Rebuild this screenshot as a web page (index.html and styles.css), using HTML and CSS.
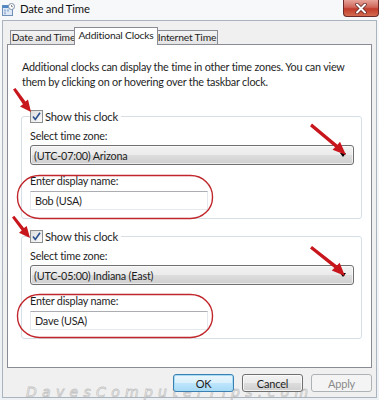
FILE: index.html
```html
<!DOCTYPE html>
<html>
<head>
<meta charset="utf-8">
<link rel="stylesheet" href="styles.css">
</head>
<body>
<div class="window">
  <div class="titlebar">
    <svg class="app-icon" width="13" height="13" viewBox="0 0 13 13">
      <rect x="0.5" y="2.5" width="10" height="10" fill="#dfe9f5" stroke="#6d8fb8"/>
      <rect x="0.5" y="2.5" width="10" height="2.5" fill="#4f86c6"/>
      <rect x="2" y="6.5" width="2" height="2" fill="#9bb6d8"/>
      <rect x="5" y="6.5" width="2" height="2" fill="#9bb6d8"/>
      <rect x="2" y="9.3" width="2" height="2" fill="#9bb6d8"/>
      <circle cx="9.5" cy="3.5" r="3" fill="#fff" stroke="#7a8ea6"/>
      <path d="M9.5 2v1.6h1.3" fill="none" stroke="#555" stroke-width="0.7"/>
    </svg>
    <span class="title">Date and Time</span>
    <div class="close">
      <svg width="14" height="11" viewBox="0 0 14 11">
        <path d="M3 1.5l8 8M11 1.5l-8 8" stroke="#5a2020" stroke-width="3.4" stroke-linecap="round"/>
        <path d="M3 1.5l8 8M11 1.5l-8 8" stroke="#fff" stroke-width="2" stroke-linecap="round"/>
      </svg>
    </div>
  </div>
  <div class="client">
    <div class="tabs">
      <div class="tab t1">Date and Time</div>
      <div class="tab t2 active">Additional Clocks</div>
      <div class="tab t3">Internet Time</div>
    </div>
    <div class="panel">
      <p class="intro">Additional clocks can display the time in other time zones. You can view them by clicking on or hovering over the taskbar clock.</p>
      <fieldset class="group">
        <legend class="legend"><span class="check"><svg width="9" height="9" viewBox="0 0 9 9"><path d="M1 4.5l2.3 3L8 0.8" fill="none" stroke="#2a4f8f" stroke-width="1.6"/></svg></span>Show this clock</legend>
        <div class="label">Select time zone:</div>
        <div class="combo"><span>(UTC-07:00) Arizona</span><span class="caret"></span></div>
        <div class="label second">Enter display name:</div>
        <div class="input">Bob (USA)</div>
      </fieldset>
      <fieldset class="group group2">
        <legend class="legend"><span class="check"><svg width="9" height="9" viewBox="0 0 9 9"><path d="M1 4.5l2.3 3L8 0.8" fill="none" stroke="#2a4f8f" stroke-width="1.6"/></svg></span>Show this clock</legend>
        <div class="label">Select time zone:</div>
        <div class="combo"><span>(UTC-05:00) Indiana (East)</span><span class="caret"></span></div>
        <div class="label second">Enter display name:</div>
        <div class="input">Dave (USA)</div>
      </fieldset>
    </div>
    <div class="buttons">
      <div class="btn default">OK</div>
      <div class="btn">Cancel</div>
      <div class="btn disabled">Apply</div>
    </div>
  </div>
  <div class="watermark">DavesComputerTips.com</div>
  <svg class="annot" width="379" height="400" viewBox="0 0 379 400">
    <g fill="#c8161d">
      <path d="M13 89.5L15.5 88L25.5 101.5L28 99.5L31 112L20 106.5L23 104.3z"/>
      <path d="M310 126.2L312 123.6L337.5 144.7L340 141.8L346 155L332.5 149.8L335.1 147.2z"/>
      <path d="M12 217.5L14.3 215.7L24 228L26.7 226L30 238L19 232.8L21.7 230.5z"/>
      <path d="M310 248.6L312 246L337 265.6L339.6 262.8L345 276L331.8 270.5L334.4 268z"/>
    </g>
    <g stroke="#c0262b" stroke-width="1.4" fill="none">
      <rect x="17.5" y="175.5" width="195" height="43" rx="22" ry="21"/>
      <rect x="17.5" y="294.5" width="195" height="43" rx="22" ry="21"/>
    </g>
  </svg>
</div>
</body>
</html>
```

FILE: styles.css
```css
* { box-sizing: border-box; }
html, body { margin: 0; padding: 0; }
body {
  width: 379px;
  height: 400px;
  overflow: hidden;
  font-family: Lato, "Open Sans", sans-serif;
  font-size: 10.8px;
  letter-spacing: -0.2px;
  color: #1e1e1e;
  background: #f4f6f8;
}
.window {
  position: relative;
  width: 379px;
  height: 400px;
  display: flex;
  flex-direction: column;
  background: linear-gradient(#f7f8f9, #eef1f4);
}
.titlebar {
  height: 20px;
  display: flex;
  align-items: flex-start;
  padding-left: 2px;
}
.app-icon { margin-top: 3px; }
.title {
  margin-left: 5px;
  margin-top: 2px;
  font-size: 11.3px;
  color: #111;
}
.close {
  margin-left: auto;
  width: 36px;
  height: 17px;
  border: 1px solid #6b2b2b;
  border-top: none;
  border-radius: 0 0 4px 4px;
  background: linear-gradient(#e7a49a, #d0675b 45%, #c13b2b 55%, #d46a50);
  display: flex;
  align-items: center;
  justify-content: center;
}
.client {
  flex: 1;
  margin: 0 2px 2px 2px;
  border: 1px solid #aab4bf;
  background: #f0f0f0;
  padding: 6px 4px 0 4px;
  display: flex;
  flex-direction: column;
}
.tabs {
  display: flex;
  align-items: flex-end;
  height: 17px;
  padding-left: 3px;
  position: relative;
  z-index: 1;
}
.tab {
  height: 14px;
  border: 1px solid #898c95;
  border-bottom: none;
  background: linear-gradient(#f3f3f3, #e4e4e4);
  line-height: 13px;
  font-size: 10.3px;
  text-align: center;
  margin-right: -1px;
  white-space: nowrap;
  flex: none;
}
.t1 { width: 67px; }
.t2 { width: 84px; }
.t3 { width: 62px; }
.tab.active {
  height: 18px;
  margin-bottom: -1px;
  background: #fff;
  line-height: 14px;
  margin-left: -2px;
  margin-right: -2px;
  position: relative;
  z-index: 2;
}
.panel {
  height: 324px;
  border: 1px solid #898c95;
  background: #fff;
  padding: 14px 9px 0 13px;
}
.intro {
  margin: 0;
  line-height: 15px;
  padding-left: 1px;
}
.group {
  margin: 20px 0 0 0;
  padding: 0 7px 8px 8px;
  border: 1px solid #d5dfe5;
  border-radius: 3px;
  min-width: 0;
}
.group2 { margin-top: 10px; }
.legend {
  padding: 0 3px 0 0;
  display: flex;
  align-items: center;
  height: 15px;
  font-size: 11.2px;
}
.check {
  width: 13px;
  height: 13px;
  border: 1px solid #8e8f8f;
  background: linear-gradient(135deg, #dcdcdc, #fbfbfb);
  display: flex;
  align-items: center;
  justify-content: center;
  margin-right: 2px;
}
.check svg { display: block; }
.label {
  margin-top: 4px;
  line-height: 15px;
}
.label.second { margin-top: 8px; }
.combo {
  margin-top: 2px;
  height: 20px;
  border: 1px solid #707070;
  border-radius: 3px;
  background: linear-gradient(#f2f2f2, #ebebeb 50%, #dddddd 51%, #cfcfcf);
  display: flex;
  align-items: center;
  padding: 0 7px 0 3px;
  font-size: 10.8px;
  box-shadow: inset 0 0 0 1px rgba(255,255,255,0.6);
}
.caret {
  margin-left: auto;
  width: 0;
  height: 0;
  border-left: 3.5px solid transparent;
  border-right: 3.5px solid transparent;
  border-top: 4px solid #000;
}
.input {
  margin-top: 3px;
  width: 178px;
  height: 19px;
  border: 1px solid #e3e9ef;
  border-top-color: #abadb3;
  background: #fff;
  padding-left: 4px;
  line-height: 17px;
  font-size: 10.8px;
}
.buttons {
  display: flex;
  justify-content: flex-end;
  gap: 8px;
  margin-top: 6px;
}
.btn {
  width: 61px;
  height: 18px;
  border: 1px solid #707070;
  border-radius: 3px;
  background: linear-gradient(#f2f2f2, #ebebeb 50%, #dddddd 51%, #cfcfcf);
  display: flex;
  align-items: center;
  justify-content: center;
  font-size: 11px;
  box-shadow: inset 0 0 0 1px rgba(255,255,255,0.7);
  position: relative;
  z-index: 1;
}
.btn.default {
  border-color: #3c7fb1;
  box-shadow: inset 0 0 0 1px #a6dcf5;
  background: linear-gradient(#eaf6fd, #d9f0fc 50%, #bee6fd 51%, #a7d9f5);
}
.btn.disabled {
  border-color: #adb2b5;
  background: #f4f4f4;
  color: #8a8a8a;
  box-shadow: none;
}
.watermark {
  position: absolute;
  left: 26px;
  top: 385px;
  font-family: "DejaVu Sans", sans-serif;
  font-style: italic;
  font-size: 14px;
  line-height: 14px;
  letter-spacing: 5.3px;
  color: rgba(255,255,255,0.5);
  -webkit-text-stroke: 0.8px rgba(175,175,175,0.7);
  white-space: nowrap;
  pointer-events: none;
}
.annot {
  position: absolute;
  left: 0;
  top: 0;
  pointer-events: none;
}
```
